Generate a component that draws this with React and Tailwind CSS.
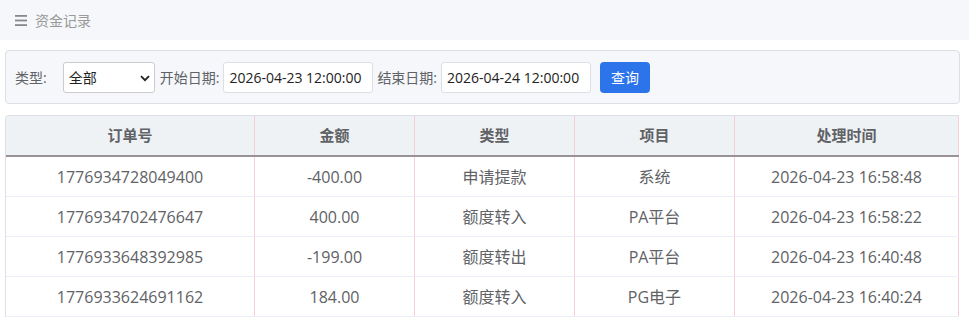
const rows = [
  { id: "1776934728049400", amount: "-400.00", type: "申请提款", item: "系统", time: "2026-04-23 16:58:48" },
  { id: "1776934702476647", amount: "400.00", type: "额度转入", item: "PA平台", time: "2026-04-23 16:58:22" },
  { id: "1776933648392985", amount: "-199.00", type: "额度转出", item: "PA平台", time: "2026-04-23 16:40:48" },
  { id: "1776933624691162", amount: "184.00", type: "额度转入", item: "PG电子", time: "2026-04-23 16:40:24" },
];

const cols = [
  { label: "订单号", key: "id", w: "w-[249px]" },
  { label: "金额", key: "amount", w: "w-[160px]" },
  { label: "类型", key: "type", w: "w-[160px]" },
  { label: "项目", key: "item", w: "w-[160px]" },
  { label: "处理时间", key: "time", w: "w-[224px]" },
];

const font = { fontFamily: '"Open Sans", "Noto Sans CJK SC", sans-serif' };

export default function App() {
  return (
    <div className="w-[969px] h-[318px] overflow-hidden bg-white" style={font}>
      {/* ===== top bar ===== */}
      <div className="h-[40px] bg-[#f5f7fa] flex items-center pl-[15px] text-[14px] text-[#999]">
        <svg width="12" height="11" viewBox="0 0 12 11" className="mr-[8px]">
          <rect x="0" y="0" width="12" height="1.8" fill="#888" />
          <rect x="0" y="4.6" width="12" height="1.8" fill="#888" />
          <rect x="0" y="9.2" width="12" height="1.8" fill="#888" />
        </svg>
        <span>资金记录</span>
      </div>

      {/* ===== filter ===== */}
      <div className="pl-[5px] pr-[9px] pt-[10px]">
        <div className="h-[54px] bg-[#f5f7fa] border border-[#dcdfe6] rounded-[4px] flex items-center pl-[9px] text-[14px] text-[#606266]">
          <span className="mr-[16px]">类型:</span>
          <div className="relative w-[92px] h-[31px] bg-white border border-[#ccc] rounded-[3px] flex items-center pl-[5px] text-[#222]">
            全部
            <svg width="10" height="7" viewBox="0 0 10 7" className="absolute right-[4px] top-[12px]">
              <path d="M1 1.2 L5 5.2 L9 1.2" fill="none" stroke="#222" strokeWidth="1.8" />
            </svg>
          </div>
          <span className="ml-[5px] mr-[4px]">开始日期:</span>
          <div className="w-[150px] h-[31px] bg-white border border-[#dcdfe6] rounded-[3px] flex items-center pl-[5px] text-[#222]">
            2026-04-23 12:00:00
          </div>
          <span className="ml-[4px] mr-[4px]">结束日期:</span>
          <div className="w-[150px] h-[31px] bg-white border border-[#dcdfe6] rounded-[3px] flex items-center pl-[5px] text-[#222]">
            2026-04-24 12:00:00
          </div>
          <button className="ml-[9px] w-[50px] h-[31px] bg-[#2b74ea] text-white rounded-[4px] text-[14px]">
            查询
          </button>
        </div>
      </div>

      {/* ===== table ===== */}
      <div className="pl-[5px] pt-[11px]">
        <div className="w-[954px] border-l border-t border-[#dcdfe6] rounded-tl-[4px] overflow-hidden">
          <div className="flex h-[41px] bg-[#eff2f5] border-b-2 border-[#9a9396]">
            {cols.map((c) => (
              <div
                key={c.key}
                className={`${c.w} flex items-center justify-center border-r border-[#f5cfd1] text-[15px] font-bold text-[#606266]`}
              >
                {c.label}
              </div>
            ))}
          </div>
          {rows.map((r) => (
            <div key={r.id} className="flex h-[40px] border-b border-[#ebeef5]">
              {cols.map((c) => (
                <div
                  key={c.key}
                  className={`${c.w} flex items-center justify-center border-r border-[#f5cfd1] text-[16px] text-[#606266]`}
                >
                  {r[c.key]}
                </div>
              ))}
            </div>
          ))}
        </div>
      </div>
    </div>
  );
}
